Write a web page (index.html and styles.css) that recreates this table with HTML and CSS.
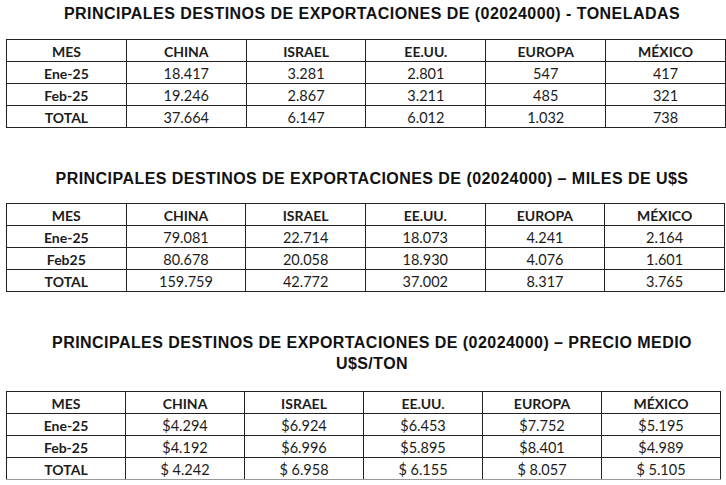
FILE: index.html
```html
<!DOCTYPE html>
<html lang="es">
<head>
<meta charset="utf-8">
<title>Principales destinos de exportaciones</title>
<link rel="stylesheet" href="styles.css">
</head>
<body>
<main class="page">
  <h2 class="title title-1">PRINCIPALES DESTINOS DE EXPORTACIONES DE (02024000) - TONELADAS</h2>
  <table class="grid grid-1">
    <thead>
      <tr><th>MES</th><th>CHINA</th><th>ISRAEL</th><th>EE.UU.</th><th>EUROPA</th><th>MÉXICO</th></tr>
    </thead>
    <tbody>
      <tr><th>Ene-25</th><td>18.417</td><td>3.281</td><td>2.801</td><td>547</td><td>417</td></tr>
      <tr><th>Feb-25</th><td>19.246</td><td>2.867</td><td>3.211</td><td>485</td><td>321</td></tr>
      <tr><th>TOTAL</th><td>37.664</td><td>6.147</td><td>6.012</td><td>1.032</td><td>738</td></tr>
    </tbody>
  </table>

  <h2 class="title title-2">PRINCIPALES DESTINOS DE EXPORTACIONES DE (02024000) – MILES DE U$S</h2>
  <table class="grid grid-2">
    <thead>
      <tr><th>MES</th><th>CHINA</th><th>ISRAEL</th><th>EE.UU.</th><th>EUROPA</th><th>MÉXICO</th></tr>
    </thead>
    <tbody>
      <tr><th>Ene-25</th><td>79.081</td><td>22.714</td><td>18.073</td><td>4.241</td><td>2.164</td></tr>
      <tr><th>Feb25</th><td>80.678</td><td>20.058</td><td>18.930</td><td>4.076</td><td>1.601</td></tr>
      <tr><th>TOTAL</th><td>159.759</td><td>42.772</td><td>37.002</td><td>8.317</td><td>3.765</td></tr>
    </tbody>
  </table>

  <h2 class="title title-3">PRINCIPALES DESTINOS DE EXPORTACIONES DE (02024000) – PRECIO MEDIO<br>U$S/TON</h2>
  <table class="grid grid-3">
    <thead>
      <tr><th>MES</th><th>CHINA</th><th>ISRAEL</th><th>EE.UU.</th><th>EUROPA</th><th>MÉXICO</th></tr>
    </thead>
    <tbody>
      <tr><th>Ene-25</th><td>$4.294</td><td>$6.924</td><td>$6.453</td><td>$7.752</td><td>$5.195</td></tr>
      <tr><th>Feb-25</th><td>$4.192</td><td>$6.996</td><td>$5.895</td><td>$8.401</td><td>$4.989</td></tr>
      <tr><th>TOTAL</th><td>$ 4.242</td><td>$ 6.958</td><td>$ 6.155</td><td>$ 8.057</td><td>$ 5.105</td></tr>
    </tbody>
  </table>
</main>
</body>
</html>
```

FILE: styles.css
```css
html, body {
  margin: 0;
  padding: 0;
  background: #ffffff;
}

.page {
  padding-top: 3px;
  width: 726px;
  overflow: hidden;
}

.title {
  margin: 0;
  padding-left: 18px;
  font-family: "Liberation Sans", Arial, sans-serif;
  font-weight: bold;
  font-size: 16px;
  letter-spacing: 0.45px;
  line-height: 21px;
  text-align: center;
  color: #111111;
  white-space: nowrap;
}

.title-1 { margin-bottom: 15px; }
.title-2 { margin-top: 40px; margin-bottom: 14px; }
.title-3 { margin-top: 40px; margin-bottom: 17px; }

.grid {
  margin-left: 6px;
  border-collapse: collapse;
  table-layout: fixed;
  font-family: Lato, "Open Sans", sans-serif;
  font-size: 14.5px;
  color: #1c1c1c;
}

.grid-1 { width: 720px; }
.grid-2 { width: 719px; }
.grid-3 { width: 715px; }

.grid th,
.grid td {
  border: 1px solid #222222;
  padding: 2px 0 0 0;
  height: 19px;
  text-align: center;
  vertical-align: middle;
  line-height: 17px;
}

.grid th {
  font-weight: bold;
  font-size: 14px;
}

.grid-3 tbody tr:last-child th,
.grid-3 tbody tr:last-child td {
  border-bottom-color: #9a9a9a;
}
```
